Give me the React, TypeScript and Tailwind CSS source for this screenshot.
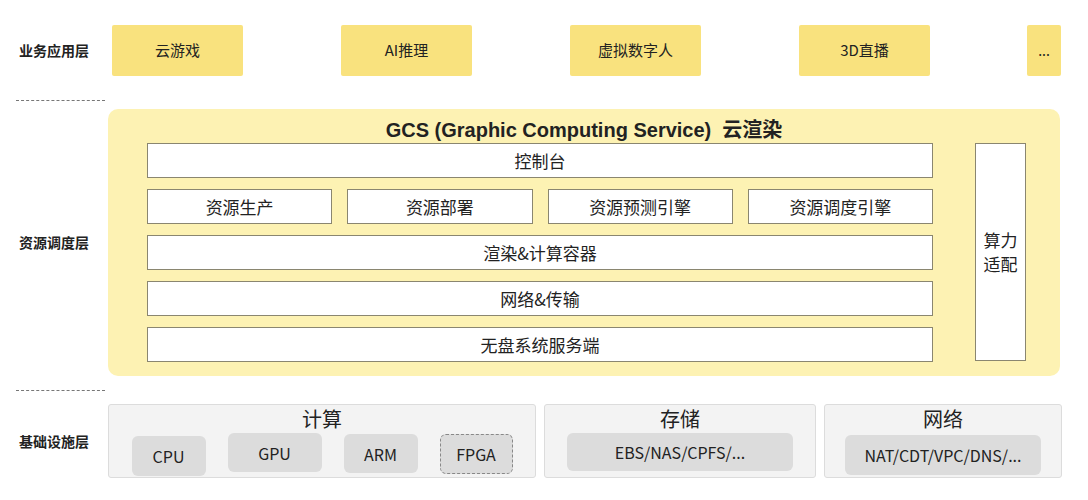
export default function App() {
  const font = { fontFamily: '"Noto Sans CJK SC", "Liberation Sans", sans-serif' };
  const row = 'h-[35px] bg-white border border-[#8a8670] flex items-center justify-center text-[17px] text-[#222]';
  return (
    <div className="w-[1088px] h-[500px] bg-white relative text-[#222]" style={font}>
      {/* application layer */}
      <div className="flex items-center pt-[25px] h-[76px]">
        <div className="w-[112px] pl-[19px] text-[14px] font-bold">业务应用层</div>
        <div className="flex gap-[98px]">
          {['云游戏', 'AI推理', '虚拟数字人', '3D直播'].map((t) => (
            <div key={t} className="w-[131px] h-[51px] bg-[#f9e27e] rounded-[2px] flex items-center justify-center text-[15px]">{t}</div>
          ))}
        </div>
        <div className="ml-[97px] w-[34px] h-[51px] bg-[#f9e27e] rounded-[2px] flex items-center justify-center text-[14px]">...</div>
      </div>
      <div className="ml-[16px] mt-[24px] w-[89px] border-t border-dashed border-[#777]" />
      {/* resource layer */}
      <div className="flex items-center mt-[8px]">
        <div className="w-[108px] pl-[19px] text-[14px] font-bold">资源调度层</div>
        <div className="w-[952px] h-[267px] bg-[#fdf2b3] rounded-[10px] pt-[8px]">
          <div className="text-center text-[20px] font-bold h-[26px] leading-[26px]" style={{ fontFamily: '"Liberation Sans", "Noto Sans CJK SC", sans-serif' }}>
            GCS (Graphic Computing Service)&nbsp; 云渲染
          </div>
          <div className="flex gap-[42px] pl-[39px]">
            <div className="w-[786px] flex flex-col gap-[11px]">
              <div className={row}>控制台</div>
              <div className="flex gap-[15px]">
                {['资源生产', '资源部署', '资源预测引擎', '资源调度引擎'].map((t) => (
                  <div key={t} className={row + ' flex-1'}>{t}</div>
                ))}
              </div>
              <div className={row}>渲染&amp;计算容器</div>
              <div className={row}>网络&amp;传输</div>
              <div className={row}>无盘系统服务端</div>
            </div>
            <div className="w-[51px] h-[218px] bg-white border border-[#8a8670] flex flex-col items-center justify-center text-[17px] leading-[24px]">
              <span>算力</span>
              <span>适配</span>
            </div>
          </div>
        </div>
      </div>
      <div className="ml-[16px] mt-[14px] w-[89px] border-t border-dashed border-[#777]" />
      {/* infra layer */}
      <div className="flex items-center mt-[13px]">
        <div className="w-[108px] pl-[19px] text-[14px] font-bold">基础设施层</div>
        <div className="flex gap-[8px]">
          <div className="w-[428px] h-[74px] bg-[#f3f3f3] border border-[#dcdcdc] rounded-[3px] flex flex-col items-center">
            <div className="text-[20px] leading-[28px]">计算</div>
            <div className="flex gap-[22px] items-start">
              <div className="w-[74px] h-[40px] mt-[3px] bg-[#dcdcdc] rounded-[6px] flex items-center justify-center text-[16px]">CPU</div>
              <div className="w-[94px] h-[39px] bg-[#dcdcdc] rounded-[6px] flex items-center justify-center text-[16px]">GPU</div>
              <div className="w-[74px] h-[39px] mt-[1px] bg-[#dcdcdc] rounded-[6px] flex items-center justify-center text-[16px]">ARM</div>
              <div className="w-[73px] h-[40px] mt-[1px] bg-[#dcdcdc] border border-dashed border-[#888] rounded-[6px] flex items-center justify-center text-[16px]">FPGA</div>
            </div>
          </div>
          <div className="w-[272px] h-[74px] bg-[#f3f3f3] border border-[#dcdcdc] rounded-[3px] flex flex-col items-center">
            <div className="text-[20px] leading-[28px]">存储</div>
            <div className="w-[226px] h-[38px] bg-[#dcdcdc] rounded-[6px] flex items-center justify-center text-[16px]">EBS/NAS/CPFS/...</div>
          </div>
          <div className="w-[238px] h-[74px] bg-[#f3f3f3] border border-[#dcdcdc] rounded-[3px] flex flex-col items-center">
            <div className="text-[20px] leading-[28px]">网络</div>
            <div className="w-[196px] h-[40px] mt-[2px] bg-[#dcdcdc] rounded-[6px] flex items-center justify-center text-[16px]">NAT/CDT/VPC/DNS/...</div>
          </div>
        </div>
      </div>
    </div>
  );
}
